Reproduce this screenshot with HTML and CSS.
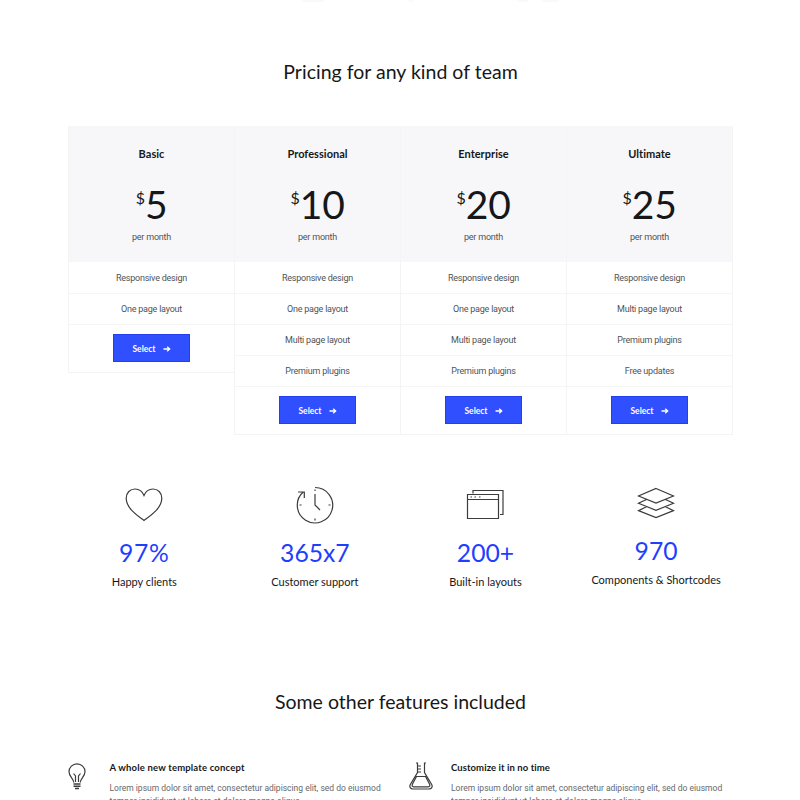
FILE: index.html
```html
<!DOCTYPE html>
<html lang="en">
<head>
<meta charset="utf-8">
<title>Pricing</title>
<link rel="stylesheet" href="styles.css">
</head>
<body>
<div class="previous"><i class="hint hint-a"></i><i class="hint hint-b"></i><i class="hint hint-c"></i><i class="hint hint-d"></i></div>
<main class="container">
  <h2 class="title">Pricing for any kind of team</h2>
  <section class="plans">
    <article class="plan">
      <header class="plan-head"><h3 class="plan-name">Basic</h3><p class="price"><sup>$</sup><span>5</span></p><p class="period">per month</p></header>
      <ul class="plan-list"><li>Responsive design</li><li>One page layout</li></ul>
      <div class="plan-foot"><a class="btn"><span>Select</span><svg class="arrow" viewBox="0 0 8 8"><path d="M.5 4H6.5M4.2 1.7 6.7 4 4.2 6.3"/></svg></a></div>
    </article>
    <article class="plan">
      <header class="plan-head"><h3 class="plan-name">Professional</h3><p class="price"><sup>$</sup><span>10</span></p><p class="period">per month</p></header>
      <ul class="plan-list"><li>Responsive design</li><li>One page layout</li><li>Multi page layout</li><li>Premium plugins</li></ul>
      <div class="plan-foot"><a class="btn"><span>Select</span><svg class="arrow" viewBox="0 0 8 8"><path d="M.5 4H6.5M4.2 1.7 6.7 4 4.2 6.3"/></svg></a></div>
    </article>
    <article class="plan">
      <header class="plan-head"><h3 class="plan-name">Enterprise</h3><p class="price"><sup>$</sup><span>20</span></p><p class="period">per month</p></header>
      <ul class="plan-list"><li>Responsive design</li><li>One page layout</li><li>Multi page layout</li><li>Premium plugins</li></ul>
      <div class="plan-foot"><a class="btn"><span>Select</span><svg class="arrow" viewBox="0 0 8 8"><path d="M.5 4H6.5M4.2 1.7 6.7 4 4.2 6.3"/></svg></a></div>
    </article>
    <article class="plan">
      <header class="plan-head"><h3 class="plan-name">Ultimate</h3><p class="price"><sup>$</sup><span>25</span></p><p class="period">per month</p></header>
      <ul class="plan-list"><li>Responsive design</li><li>Multi page layout</li><li>Premium plugins</li><li>Free updates</li></ul>
      <div class="plan-foot"><a class="btn"><span>Select</span><svg class="arrow" viewBox="0 0 8 8"><path d="M.5 4H6.5M4.2 1.7 6.7 4 4.2 6.3"/></svg></a></div>
    </article>
  </section>

  <section class="stats">
    <div class="stat">
      <svg class="stat-icon" viewBox="0 0 38 38"><path d="M19 34.5C13 30 1.2 22.500 1.200 12.300C1.200 6.600 5.200 3 10 3C14.200 3 17.300 5.200 19 9.400C20.700 5.200 23.800 3 28 3C32.800 3 36.800 6.600 36.800 12.300C36.800 22.500 25 30 19 34.500Z"/></svg>
      <p class="figure figure-wide">97%</p><p class="label">Happy clients</p>
    </div>
    <div class="stat">
      <svg class="stat-icon" viewBox="0 0 38 38"><path d="M19 1.500A17.700 17.700 0 1 1 7.200 6M2 6H8.300V12M19 3.500V5M19 8V19L24 24M3.500 19H5.500M32.500 19H34.500M19 32.500V34.500"/></svg>
      <p class="figure">365x7</p><p class="label">Customer support</p>
    </div>
    <div class="stat">
      <svg class="stat-icon" viewBox="0 0 38 38"><path d="M1.500 8.500H32.500V32.500H1.500ZM1.500 13.500H32.500M4.500 11H6M8.500 11H10M13 11H14.500M7 7.500V4.500H37V28.500H34"/></svg>
      <p class="figure">200+</p><p class="label">Built-in layouts</p>
    </div>
    <div class="stat stat-raised">
      <svg class="stat-icon" viewBox="0 0 38 38"><path d="M19 4.500 36.500 12 19 19 1.500 12ZM9.500 15.500 1.500 19.300 19 26.300 36.500 19.300 28.500 15.500M9.500 22.800 1.500 26.600 19 33.500 36.500 26.600 28.500 22.800"/></svg>
      <p class="figure">970</p><p class="label">Components &amp; Shortcodes</p>
    </div>
  </section>

  <h2 class="title title-features">Some other features included</h2>
  <section class="features">
    <article class="feature">
      <svg class="bulb" viewBox="0 0 18 27"><path d="M5.700 19.500C5.500 15.500 1 13.500 1 8.800A8 8 0 0 1 17 8.800C17 13.500 12.500 15.500 12.300 19.500M7.500 19V13L5.500 10.500M10.500 19V13L12.500 10.500"/><path class="screw" d="M5.500 21H12.500M5.500 23.200H12.500M7 25.500H11"/></svg>
      <div class="feature-text"><h4>A whole new template concept</h4><p>Lorem ipsum dolor sit amet, consectetur adipiscing elit, sed do eiusmod<br>tempor incididunt ut labore et dolore magna aliqua.</p></div>
    </article>
    <article class="feature">
      <svg class="flask" viewBox="0 0 24 28"><path d="M7 1H8.500V10.500L1.300 22.500C.2 24.800 1.300 27 4 27H20C22.700 27 23.800 24.800 22.700 22.500L15.500 10.500V1H17M8.500 4H12M8.500 7H12M8.500 10H12M7.500 14.500H16.500L20.500 22C21.200 23.700 20.800 24.800 19.300 24.800H4.700C3.200 24.800 2.800 23.700 3.500 22Z"/></svg>
      <div class="feature-text"><h4 class="tight">Customize it in no time</h4><p>Lorem ipsum dolor sit amet, consectetur adipiscing elit, sed do eiusmod<br>tempor incididunt ut labore et dolore magna aliqua.</p></div>
    </article>
  </section>
</main>
</body>
</html>
```

FILE: styles.css
```css
* { box-sizing: border-box; }
html, body { height: 800px; overflow: hidden; }
body { margin: 0; background: #fff; color: #161719; font-family: Lato, sans-serif; }
h2, h3, h4, p, ul { margin: 0; padding: 0; }
ul { list-style: none; }
svg { display: block; fill: none; stroke: #3c3c3c; stroke-width: 1.2; }

.previous { height: 3px; display: flex; padding-left: 302px; }
.hint { height: 2px; background: #f9f9f9; border-radius: 0 0 4px 4px; }
.hint-a { width: 22px; }
.hint-b { width: 5px; margin-left: 84px; }
.hint-c { width: 12px; margin-left: 104px; }
.hint-d { width: 17px; margin-left: 13px; }

.container { width: 665px; margin-left: 68px; }
.title { margin-top: 54px; height: 30px; line-height: 30px; font-size: 19.500px; font-weight: 400; text-align: center; letter-spacing: .01px; white-space: nowrap; }

.plans { display: grid; grid-template-columns: repeat(4, 166px); align-items: start; margin-top: 39px; height: 309px; }
.plan { width: 167px; border: 1px solid #f4f4f5; text-align: center; }
.plan-head { height: 136px; margin-top: -1px; padding-top: 19px; background: #f7f7f9; }
.plan-name { height: 18px; line-height: 18px; font-size: 11px; font-weight: 700; letter-spacing: .03px; }
.price { display: flex; justify-content: center; height: 50px; margin-top: 16px; font-size: 39px; line-height: 50px; }
.price sup { font-size: 16px; line-height: 38px; }
.price span { letter-spacing: -.3px; }
.period { height: 16px; font: 9px/16px Roboto, sans-serif; letter-spacing: -.2px; color: #505357; }
.plan-list { padding-top: 1px; }
.plan-list li { height: 31px; border-bottom: 1px solid #f5f5f6; font: 9px/31px Roboto, sans-serif; letter-spacing: -.22px; color: #505357; }
.plan-foot { height: 47px; padding-top: 9px; }
.btn { display: flex; width: 77px; height: 28px; margin: 0 auto; padding-top: 1px; align-items: center; justify-content: center; gap: 7px; background: #304ffe; border: 1px solid #2440ee; color: #fff; font-size: 8.500px; font-weight: 700; }
.arrow { width: 8px; height: 8px; stroke: #fff; stroke-width: 1.300; }

.stats { display: grid; grid-template-columns: repeat(4, 170.600px); margin: 51px 0 0 -9px; height: 124px; }
.stat { text-align: center; }
.stat-icon { width: 38px; height: 38px; margin: 0 auto; }
.figure { height: 30px; margin-top: 14px; line-height: 30px; font-size: 24.700px; color: #1f3fff; }
.figure-wide { letter-spacing: .7px; }
.label { height: 18px; margin-top: 5px; line-height: 18px; font-size: 11px; white-space: nowrap; }
.stat-raised .stat-icon { margin-top: -2px; }

.title-features { margin-top: 77px; }
.features { display: grid; grid-template-columns: 341px 341px; margin-top: 43px; }
.feature { display: flex; }
.bulb { width: 18px; height: 27px; margin: 3px 24px 0 0; }
.flask { width: 24px; height: 28px; margin: 2px 18px 0 0; }
.feature:first-child .feature-text { margin-left: -.5px; }
.screw { stroke-width: 1.500; }
.feature-text h4 { height: 16px; line-height: 16px; font-size: 9.500px; font-weight: 700; letter-spacing: .17px; }
.feature-text .tight { letter-spacing: .08px; }
.feature-text p { margin-top: 6px; font: 8.500px/12.500px Roboto, sans-serif; color: #65686c; white-space: nowrap; }
```
